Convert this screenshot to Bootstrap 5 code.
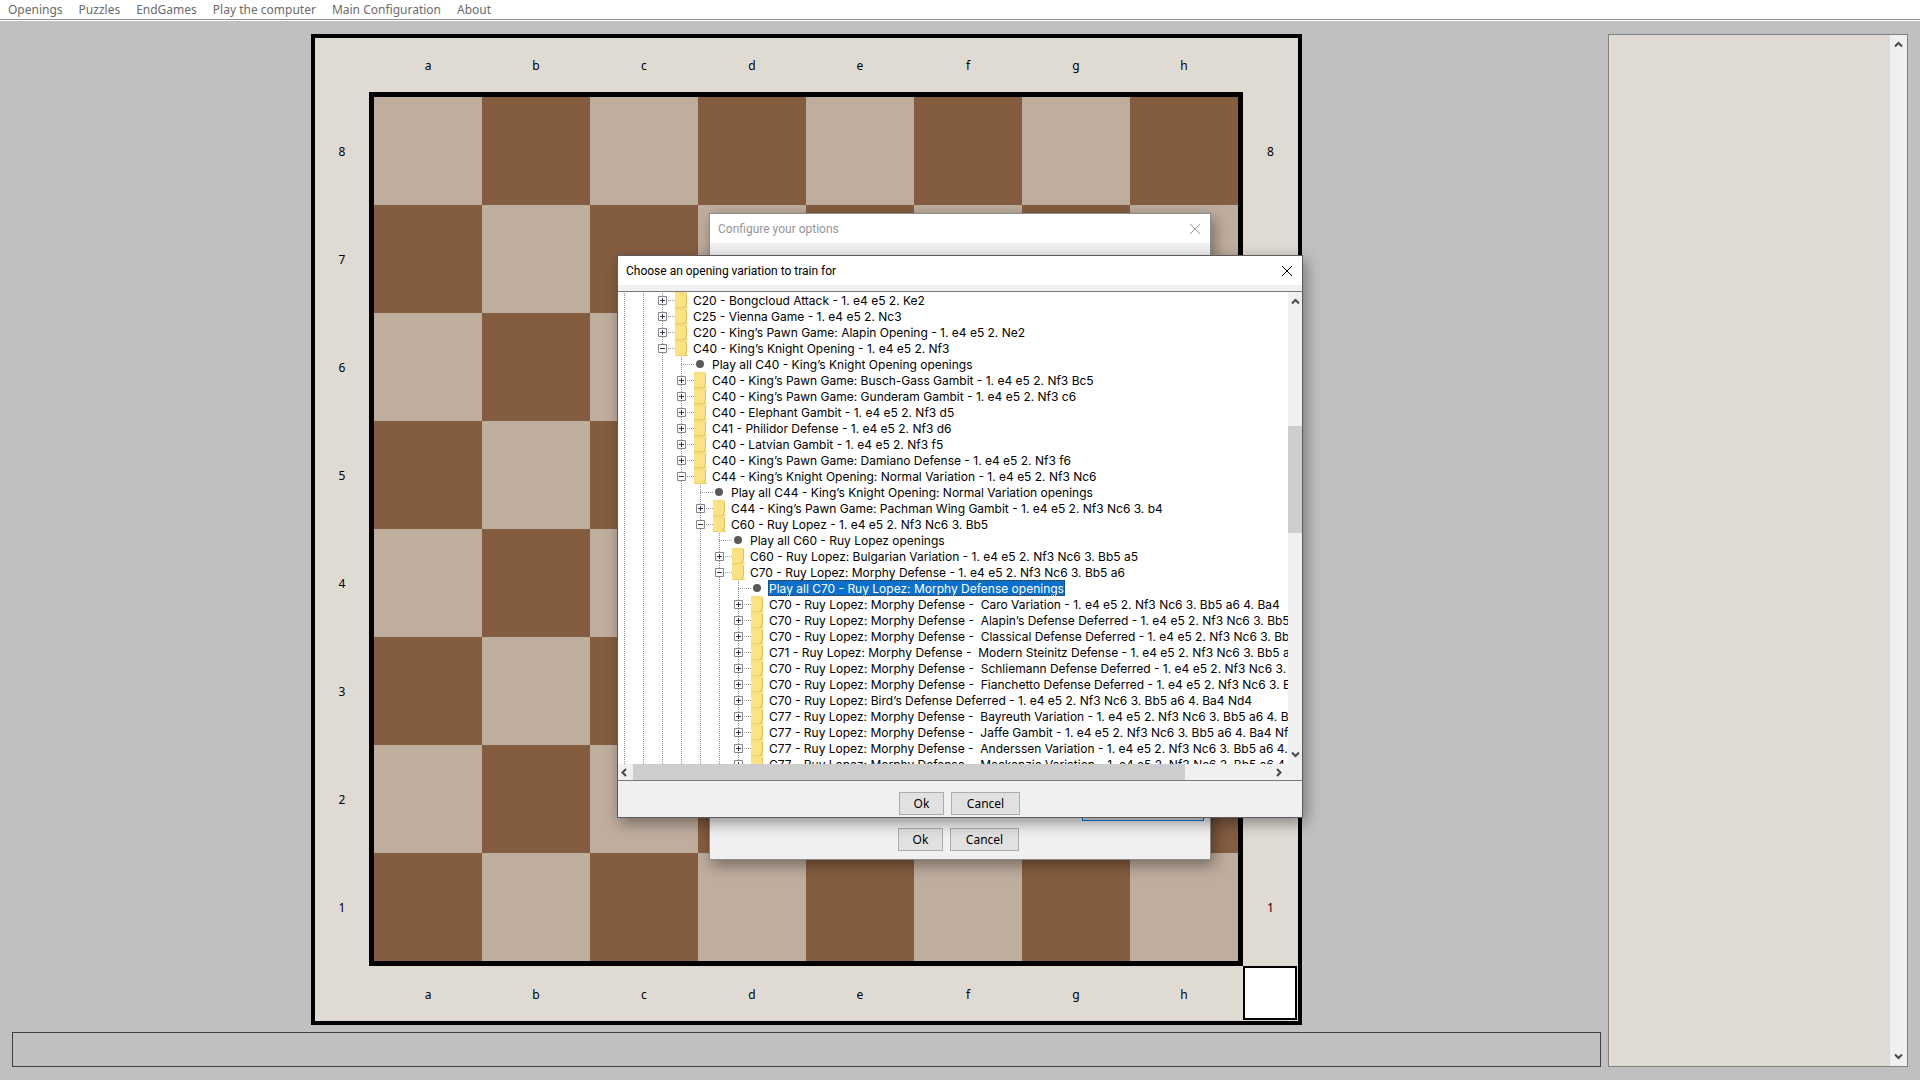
<!DOCTYPE html>
<html lang="en">
<head>
<meta charset="utf-8">
<meta name="viewport" content="width=device-width, initial-scale=1">
<title>Chess openings trainer</title>
<link rel="stylesheet" href="https://cdn.jsdelivr.net/npm/bootstrap@5.3.0/dist/css/bootstrap.min.css">
<style>
  body { background: #c0c0c0; color: #000; font-family: "Noto Sans", sans-serif; font-size: 12px; line-height: 16px; }

  .menu-bar { height: 21px; padding: 0 8px; gap: 16px; box-shadow: inset 0 -1px #fff, inset 0 -2px #909090; }
  .menu-bar a { color: #6b6b6b; line-height: 19px; }
  .workspace { padding: 13px 12px; gap: 7px; }

  /* Chess board */
  .board-frame { flex: 1 1 0; aspect-ratio: 1; display: grid; grid-template: 54px 1fr 55px / 54px 1fr 55px; border: 4px solid #000; background: #dfdad2; }
  .files, .ranks { display: grid; place-items: center; }
  .files span, .ranks span { padding-top: 2px; }
  .files { grid-template-columns: repeat(8, 1fr); grid-column: 2; padding: 0 5px; }
  .files-top { grid-row: 1; }
  .files-bottom { grid-row: 3; }
  .ranks { grid-template-rows: repeat(8, 1fr); grid-row: 2; padding: 5px 0; }
  .squares { display: grid; grid-template: repeat(8, 1fr) / repeat(8, 1fr); grid-area: 2 / 2; border: 5px solid #000; background: #bfad9e; }
  .square-dark { background: #845d40; }
  .turn-marker { grid-area: 3 / 3; margin: 0 1px 1px 0; border: 2px solid #000; background: #fff; }
  .status-line { height: 35px; margin-top: 7px; border: 1px solid #404040; }
  .moves-panel { width: 300px; border: 1px solid #808080; background: #dfdad2; }

  /* Scroll bars */
  .bar-v { background: #f0f0f0; width: 14px; padding: 5px 0; }
  .moves-panel .bar-v { width: 17px; }
  .bar-h { background: #f0f0f0; height: 16px; margin-right: 14px; padding: 0 5px 0 2px; }
  .bar-thumb { background: #cdcdcd; }
  .bar-v .bar-thumb { height: 107px; margin-top: 120px; }
  .bar-h .bar-thumb { width: 552px; margin-left: 4px; }
  .bar-arrow { width: 9px; height: 9px; fill: none; stroke: #484848; stroke-width: 2; }

  /* Windows */
  .desktop-layer { inset: 0; padding-bottom: 7px; }
  .win { border: 1px solid #5c5c5c; background: #f0f0f0; box-shadow: 3px 5px 14px rgba(0, 0, 0, .4); }
  .win-options { width: 502px; height: 647px; border-color: #8c8c8c; }
  .win-tree { width: 686px; }
  .win-title { background: #fff; height: 29px; padding: 0 9px 0 8px; font-family: Roboto, sans-serif; }
  .win-options .win-title { color: #969696; }
  .win-close { border: 0; background: none; padding: 0; color: inherit; }
  .win-close svg { display: block; width: 12px; height: 12px; stroke: currentColor; fill: none; }
  .push { height: 23px; border: 1px solid #adadad; background: #e1e1e1; padding: 0; border-radius: 0; }
  .push-ok { width: 45px; }
  .push-cancel { width: 69px; }
  .push-row { gap: 7px; padding: 11px 1px 2px 0; }
  .win-options .push-row { height: 38px; padding: 7px 3px 0 0; }
  .help-row { padding: 11px 16px 0 0; }
  .help-link { border: 0; background: none; padding: 0; }
  .choice-row { gap: 9px; padding: 0 6px 0 71px; }
  .choice-text { height: 21px; border: 1px solid #9a9ab0; background: #f0f0f0; margin-bottom: 3px; }
  .choice-pick { width: 122px; height: 24px; border: 1px solid #0078d7; background: #dce4ec; }

  /* Openings tree */
  .tree-pane { margin-top: 6px; border: solid #7a7a7a; border-width: 1px 0; }
  .tree-view { height: 472px; min-width: 0; background: #fff; padding-left: 6px; overflow: hidden; font-family: Inter, sans-serif; }
  .tree-view ul { list-style: none; margin: 0; padding: 0; background: repeating-linear-gradient(#8c8c8c 0 1px, #fff 1px 2px) left / 1px 2px repeat-y; }
  .tree-view li > ul { margin-left: 19px; }
  .tree-node { height: 16px; white-space: pre; }
  .tree-branch { width: 13px; height: 16px; flex: none; background: repeating-linear-gradient(90deg, #a0a0a0 0 1px, transparent 1px 2px) 0 8px / 13px 1px no-repeat; }
  .tree-leaf .tree-branch { width: 15px; }
  .tree-toggle { display: block; width: 9px; height: 9px; margin: 4px 0 0 -4px; padding: 0; border: 0; background: none; }
  .tree-toggle svg { display: block; width: 9px; height: 9px; }
  .tree-folder { width: 13px; height: 16px; flex: none; margin-right: 4px; }
  .tree-dot { width: 8px; height: 8px; flex: none; margin-right: 7px; border-radius: 50%; background: #5a5a5a; }
  .tree-label { padding: 0 1px; line-height: 17px; height: 16px; }
  .tree-picked { background: #0a70cc; color: #fff; outline: 1px dotted #143a5c; outline-offset: -1px; }
</style>
<script src="https://cdn.jsdelivr.net/npm/bootstrap@5.3.0/dist/js/bootstrap.bundle.min.js"></script>
</head>
<body class="vh-100 d-flex flex-column overflow-hidden position-relative">

<nav class="menu-bar bg-white d-flex flex-shrink-0">
  <a class="text-decoration-none" href="#">Openings</a>
  <a class="text-decoration-none" href="#">Puzzles</a>
  <a class="text-decoration-none" href="#">EndGames</a>
  <a class="text-decoration-none" href="#">Play the computer</a>
  <a class="text-decoration-none" href="#">Main Configuration</a>
  <a class="text-decoration-none" href="#">About</a>
</nav>

<main class="workspace d-flex flex-grow-1">
  <section class="d-flex flex-column flex-grow-1 align-items-center">
    <div class="board-frame">
      <div class="files files-top"></div>
      <div class="ranks"></div>
      <div class="squares"></div>
      <div class="ranks"></div>
      <div class="files files-bottom"></div>
      <div class="turn-marker"></div>
    </div>
    <div class="status-line w-100"></div>
  </section>
  <aside class="moves-panel d-flex justify-content-end flex-shrink-0">
    <div class="bar-v d-flex flex-column justify-content-between align-items-center">
      <svg class="bar-arrow" viewBox="0 0 9 9"><path d="M1 6.5 4.5 3 8 6.5"/></svg>
      <svg class="bar-arrow" viewBox="0 0 9 9"><path d="M1 2.5 4.5 6 8 2.5"/></svg>
    </div>
  </aside>
</main>

<div class="desktop-layer position-absolute d-flex align-items-center justify-content-center">
  <section class="win win-options d-flex flex-column">
    <header class="win-title d-flex align-items-center justify-content-between">
      <span>Configure your options</span>
      <button class="win-close" aria-label="Close"><svg viewBox="0 0 12 12"><path d="M1 1 11 11M11 1 1 11"/></svg></button>
    </header>
    <div class="help-row d-flex justify-content-end"><button class="help-link">Help</button></div>
    <div class="choice-row d-flex align-items-end mt-auto">
      <input class="choice-text flex-grow-1" aria-label="Opening" readonly>
      <button class="choice-pick" aria-label="Choose opening"></button>
    </div>
    <div class="push-row d-flex justify-content-center">
      <button class="push push-ok">Ok</button>
      <button class="push push-cancel">Cancel</button>
    </div>
  </section>
</div>

<div class="desktop-layer position-absolute d-flex align-items-center justify-content-center">
  <section class="win win-tree">
    <header class="win-title d-flex align-items-center justify-content-between">
      <span>Choose an opening variation to train for</span>
      <button class="win-close" aria-label="Close"><svg viewBox="0 0 12 12"><path d="M1 1 11 11M11 1 1 11"/></svg></button>
    </header>
    <div class="tree-pane">
      <div class="d-flex">
        <div class="tree-view flex-grow-1"></div>
        <div class="bar-v d-flex flex-column align-items-center flex-shrink-0">
          <svg class="bar-arrow" viewBox="0 0 9 9"><path d="M1 6.5 4.5 3 8 6.5"/></svg>
          <div class="bar-thumb w-100"></div>
          <svg class="bar-arrow mt-auto" viewBox="0 0 9 9"><path d="M1 2.5 4.5 6 8 2.5"/></svg>
        </div>
      </div>
      <div class="bar-h d-flex align-items-center">
        <svg class="bar-arrow" viewBox="0 0 9 9"><path d="M6 1 2.5 4.5 6 8"/></svg>
        <div class="bar-thumb h-100"></div>
        <svg class="bar-arrow ms-auto" viewBox="0 0 9 9"><path d="M3 1 6.5 4.5 3 8"/></svg>
      </div>
    </div>
    <div class="push-row d-flex justify-content-center">
      <button class="push push-ok">Ok</button>
      <button class="push push-cancel">Cancel</button>
    </div>
  </section>
</div>

<script>
// Board: coordinates and squares
document.querySelectorAll('.files').forEach(el => el.innerHTML = [...'abcdefgh'].map(c => `<span>${c}</span>`).join(''));
document.querySelectorAll('.ranks').forEach(el => el.innerHTML = [...'87654321'].map(c => `<span>${c}</span>`).join(''));
document.querySelector('.squares').innerHTML = Array.from({ length: 64 }, (_, i) =>
  `<div${(i + (i >> 3)) % 2 ? ' class="square-dark"' : ''}></div>`).join('');

// Openings tree: a string is a closed folder, [name, moves, children] an open one
const morphy = (code, name, rest) => `${code} - Ruy Lopez: Morphy Defense -  ${name} - 1. e4 e5 2. Nf3 Nc6 3. Bb5 a6 4. Ba4${rest}`;
const openings = [
  'C20 - Bongcloud Attack - 1. e4 e5 2. Ke2',
  'C25 - Vienna Game - 1. e4 e5 2. Nc3',
  'C20 - King’s Pawn Game: Alapin Opening - 1. e4 e5 2. Ne2',
  ['C40 - King’s Knight Opening', '1. e4 e5 2. Nf3', [
    'C40 - King’s Pawn Game: Busch-Gass Gambit - 1. e4 e5 2. Nf3 Bc5',
    'C40 - King’s Pawn Game: Gunderam Gambit - 1. e4 e5 2. Nf3 c6',
    'C40 - Elephant Gambit - 1. e4 e5 2. Nf3 d5',
    'C41 - Philidor Defense - 1. e4 e5 2. Nf3 d6',
    'C40 - Latvian Gambit - 1. e4 e5 2. Nf3 f5',
    'C40 - King’s Pawn Game: Damiano Defense - 1. e4 e5 2. Nf3 f6',
    ['C44 - King’s Knight Opening: Normal Variation', '1. e4 e5 2. Nf3 Nc6', [
      'C44 - King’s Pawn Game: Pachman Wing Gambit - 1. e4 e5 2. Nf3 Nc6 3. b4',
      ['C60 - Ruy Lopez', '1. e4 e5 2. Nf3 Nc6 3. Bb5', [
        'C60 - Ruy Lopez: Bulgarian Variation - 1. e4 e5 2. Nf3 Nc6 3. Bb5 a5',
        ['C70 - Ruy Lopez: Morphy Defense', '1. e4 e5 2. Nf3 Nc6 3. Bb5 a6', [
          morphy('C70', 'Caro Variation', ''),
          morphy('C70', 'Alapin’s Defense Deferred', ' Bb4'),
          morphy('C70', 'Classical Defense Deferred', ' Bc5'),
          morphy('C71', 'Modern Steinitz Defense', ' d6'),
          morphy('C70', 'Schliemann Defense Deferred', ' f5'),
          morphy('C70', 'Fianchetto Defense Deferred', ' g6'),
          'C70 - Ruy Lopez: Bird’s Defense Deferred - 1. e4 e5 2. Nf3 Nc6 3. Bb5 a6 4. Ba4 Nd4',
          morphy('C77', 'Bayreuth Variation', ' Nf6'),
          morphy('C77', 'Jaffe Gambit', ' Nf6'),
          morphy('C77', 'Anderssen Variation', ' Nf6'),
          morphy('C77', 'Mackenzie Variation', ' Nf6')
        ]]
      ]]
    ]]
  ]]
];
const picked = 'C70 - Ruy Lopez: Morphy Defense';
const folder = '<svg class="tree-folder" viewBox="0 0 13 16"><path d="M0 0h11v10l2 6H0z" fill="#fbe283"/><path d="M0 1h10" stroke="#f5d76c"/><path d="M11.5 1v10l-2 4.500" stroke="#e3c055" fill="none"/><path d="M0 15.500h13" stroke="#edd06a"/></svg>';
const toggle = open => `<button class="tree-toggle" aria-label="${open ? 'Collapse' : 'Expand'}"><svg viewBox="0 0 9 9"><path d="M.5.5h8v8h-8z" fill="#fff" stroke="#868686"/><path d="M2 4.500h5${open ? '' : 'M4.500 2v5'}" stroke="#303050"/></svg></button>`;
const node = (text, open) => `<div class="tree-node d-flex"><span class="tree-branch">${toggle(open)}</span>${folder}<span class="tree-label">${text}</span></div>`;
const leaf = name => `<li class="tree-leaf"><div class="tree-node d-flex align-items-center"><span class="tree-branch"></span><span class="tree-dot"></span><span class="tree-label${name === picked ? ' tree-picked' : ''}">Play all ${name} openings</span></div></li>`;
const list = items => '<ul>' + items.map(it => typeof it === 'string'
  ? `<li>${node(it, false)}</li>`
  : `<li>${node(it[0] + ' - ' + it[1], true)}<ul>${leaf(it[0])}${list(it[2]).slice(4)}</li>`).join('') + '</ul>';
document.querySelector('.tree-view').innerHTML = `<ul><li><ul><li>${list(openings)}</li></ul></li></ul>`;
</script>
</body>
</html>
